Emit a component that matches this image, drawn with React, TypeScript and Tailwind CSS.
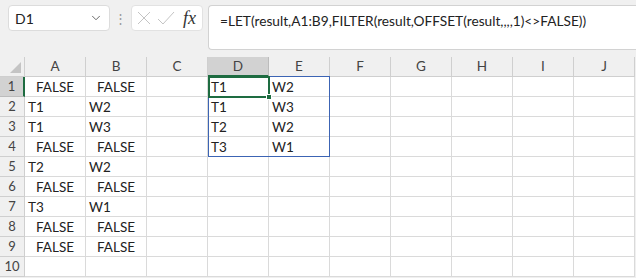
import { ChevronDown } from 'lucide-react';

const cols = ['A', 'B', 'C', 'D', 'E', 'F', 'G', 'H', 'I', 'J'];

// FALSE is centered, text left
const rows: Record<number, Partial<Record<string, string>>> = {
  1: { A: 'FALSE', B: 'FALSE', D: 'T1', E: 'W2' },
  2: { A: 'T1', B: 'W2', D: 'T1', E: 'W3' },
  3: { A: 'T1', B: 'W3', D: 'T2', E: 'W2' },
  4: { A: 'FALSE', B: 'FALSE', D: 'T3', E: 'W1' },
  5: { A: 'T2', B: 'W2' },
  6: { A: 'FALSE', B: 'FALSE' },
  7: { A: 'T3', B: 'W1' },
  8: { A: 'FALSE', B: 'FALSE' },
  9: { A: 'FALSE', B: 'FALSE' },
  10: {},
};

const font = { fontFamily: 'Lato, "Liberation Sans", sans-serif' };

function Cell({ value }: { value?: string }) {
  const isBool = value === 'FALSE';
  return (
    <div
      className={`h-[20px] border-r border-b border-[#dadada] bg-white flex items-center pt-[2px] text-[13.5px] text-[#222] overflow-hidden whitespace-nowrap ${isBool ? 'justify-center' : 'pl-[3px]'}`}
    >
      {value}
    </div>
  );
}

export default function App() {
  return (
    <div className="w-[636px] h-[278px] overflow-hidden bg-[#f0f0f0]" style={font}>
      {/* formula bar */}
      <div className="flex h-[57px] pt-[5px]">
        <div className="ml-[8px] w-[102px] h-[26px] bg-white border border-[#dcdcdc] rounded-[4px] flex items-center justify-between pl-[6px] pr-[6px]">
          <span className="text-[14px] text-[#222]">D1</span>
          <ChevronDown className="w-[14px] h-[14px] text-[#555]" strokeWidth={1.5} />
        </div>
        <div className="w-[21px] flex items-center justify-center h-[26px] text-[#999] text-[13px] leading-none">⋮</div>
        <div className="w-[72px] h-[26px] bg-white border border-[#e2e2e2] rounded-[4px] flex items-center pl-[4px]">
          <svg width="16" height="16" viewBox="0 0 16 16" className="text-[#c4c4c4]">
            <path d="M2 2 L14 14 M14 2 L2 14" stroke="currentColor" strokeWidth="1" fill="none" />
          </svg>
          <svg width="18" height="16" viewBox="0 0 18 16" className="ml-[5px] text-[#c4c4c4]">
            <path d="M1 9 L6 14 L17 2" stroke="currentColor" strokeWidth="1" fill="none" />
          </svg>
          <span className="ml-[8px] text-[18px] italic text-[#333] leading-none" style={{ fontFamily: '"Liberation Serif", serif' }}>
            fx
          </span>
        </div>
        <div className="ml-[5px] flex-1 h-[45px] bg-white border-t border-l border-b border-[#d2d2d2] rounded-tl-[4px] rounded-bl-[4px] pl-[11px] pt-[5px] text-[13.7px] text-[#222]">
          =LET(result,A1:B9,FILTER(result,OFFSET(result,,,,1)&lt;&gt;FALSE))
        </div>
      </div>

      {/* grid */}
      <div className="relative grid grid-cols-[25px_repeat(10,61px)]">
        <div className="h-[20px] border-r border-b border-[#cfcfcf] bg-[#f0f0f0] relative">
          <div className="absolute right-[3px] bottom-[3px] w-0 h-0 border-l-[11px] border-l-transparent border-b-[11px] border-b-[#c4c4c4]" />
        </div>
        {cols.map((c) =>
          c === 'D' ? (
            <div key={c} className="h-[20px] bg-[#d2d2d2] border-r border-[#bcbcbc] border-b-2 border-b-[#1e6c41] flex items-center justify-center text-[13.5px] text-[#444]">
              {c}
            </div>
          ) : (
            <div key={c} className="h-[20px] bg-[#f0f0f0] border-r border-b border-[#cfcfcf] flex items-center justify-center text-[13.5px] text-[#444]">
              {c}
            </div>
          ),
        )}
        {Object.entries(rows).map(([n, vals]) => (
          <div key={n} className="contents">
            <div
              className={`h-[20px] border-b flex items-center justify-center text-[13px] text-[#444] ${n === '1' ? 'bg-[#d2d2d2] border-[#bcbcbc] border-r-2 border-r-[#1e6c41]' : 'bg-[#f0f0f0] border-r border-[#cfcfcf]'}`}
            >
              {n}
            </div>
            {cols.map((c) => (
              <Cell key={c} value={vals[c]} />
            ))}
          </div>
        ))}

        {/* spill range D1:E4 */}
        <div className="absolute left-[208px] top-[19px] w-[122px] h-[81px] border border-[#3c64b4] pointer-events-none" />
        {/* active cell D1 */}
        <div className="absolute left-[208px] top-[19px] w-[62px] h-[22px] border-2 border-[#1e6c41] pointer-events-none" />
        <div className="absolute left-[266px] top-[37px] w-[6px] h-[6px] bg-[#1e6c41] border border-white" />
      </div>
    </div>
  );
}
